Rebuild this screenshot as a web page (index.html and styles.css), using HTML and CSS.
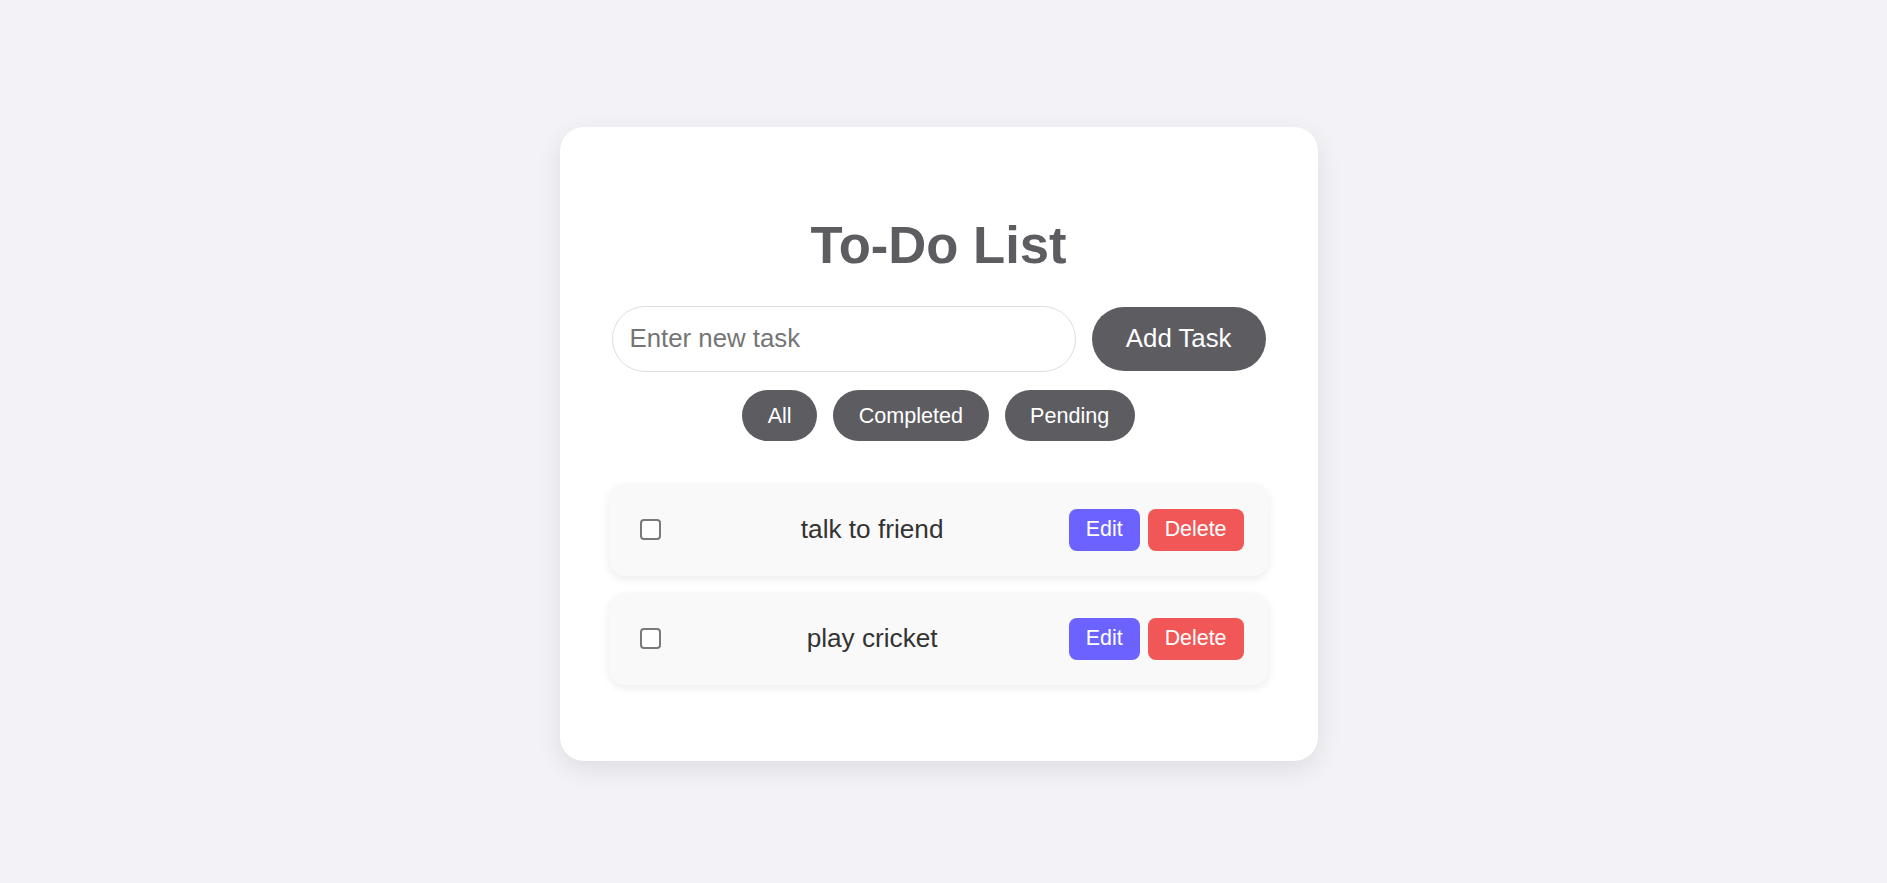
FILE: index.html
```html
<!DOCTYPE html>
<html lang="en">
<head>
<meta charset="UTF-8">
<title>To-Do List</title>
<link rel="stylesheet" href="styles.css">
</head>
<body>
<main class="page">
  <section class="card">
    <h1 class="title">To-Do List</h1>
    <form class="add-row">
      <input class="task-input" type="text" placeholder="Enter new task">
      <button class="add-btn" type="button">Add Task</button>
    </form>
    <div class="filters">
      <button class="filter-btn" type="button">All</button>
      <button class="filter-btn" type="button">Completed</button>
      <button class="filter-btn" type="button">Pending</button>
    </div>
    <ul class="task-list">
      <li class="task">
        <input class="task-check" type="checkbox">
        <span class="task-text">talk to friend</span>
        <button class="edit-btn" type="button">Edit</button>
        <button class="delete-btn" type="button">Delete</button>
      </li>
      <li class="task">
        <input class="task-check" type="checkbox">
        <span class="task-text">play cricket</span>
        <button class="edit-btn" type="button">Edit</button>
        <button class="delete-btn" type="button">Delete</button>
      </li>
    </ul>
  </section>
</main>
</body>
</html>
```

FILE: styles.css
```css
* {
  box-sizing: border-box;
}

html, body {
  margin: 0;
  padding: 0;
}

body {
  background: #f3f3f7;
  font-family: "Liberation Sans", Arial, sans-serif;
  min-height: 100vh;
}

.page {
  display: flex;
  justify-content: center;
  align-items: flex-start;
  padding: 127px 10px 0 0;
}

.card {
  width: 758px;
  background: #ffffff;
  border-radius: 24px;
  padding: 49px;
  box-shadow: 0 8px 26px rgba(0, 0, 0, 0.09);
}

.title {
  margin: 39px 0 32px;
  text-align: center;
  font-size: 52.6px;
  font-weight: 700;
  color: #5d5c61;
  line-height: 59px;
}

.add-row {
  display: flex;
  align-items: center;
  gap: 16px;
  margin: 0 3px 18px;
}

.task-input {
  flex: 1;
  min-width: 0;
  font-family: inherit;
  font-size: 25.8px;
  line-height: 29.5px;
  padding: 17px 17px;
  border: 1px solid #dddddd;
  border-radius: 40px;
  color: #333;
  background: #fff;
  outline: none;
}

.task-input::placeholder {
  color: #757575;
}

.add-btn {
  font-family: inherit;
  font-size: 25.8px;
  line-height: 29.5px;
  padding: 17px 34px;
  border: none;
  border-radius: 40px;
  background: #5d5c61;
  color: #ffffff;
}

.filters {
  display: flex;
  justify-content: center;
  gap: 16px;
  margin-bottom: 43px;
}

.filter-btn {
  font-family: inherit;
  font-size: 21.6px;
  line-height: 25px;
  padding: 13px 25.5px;
  border: none;
  border-radius: 30px;
  background: #5d5c61;
  color: #ffffff;
}

.task-list {
  list-style: none;
  margin: 0;
  padding: 0 0 10px;
}

.task {
  display: flex;
  align-items: center;
  background: #f9f9f9;
  border-radius: 16px;
  padding: 25px;
  margin-bottom: 17px;
  box-shadow: 0 3px 8px rgba(0, 0, 0, 0.08);
}

.task-check {
  appearance: none;
  -webkit-appearance: none;
  width: 21px;
  height: 21px;
  margin: 0 5px 0 6px;
  border: 2px solid #7a7a7a;
  border-radius: 4px;
  background: #ffffff;
}

.task-text {
  flex: 1;
  text-align: center;
  font-size: 26.2px;
  color: #333333;
  margin-left: 10px;
}

.edit-btn,
.delete-btn {
  font-family: inherit;
  font-size: 21.4px;
  line-height: 25px;
  padding: 8.5px 17px;
  border: none;
  border-radius: 8px;
  color: #ffffff;
}

.edit-btn {
  background: #6c63ff;
  margin-right: 8px;
}

.delete-btn {
  background: #f25757;
}
```
